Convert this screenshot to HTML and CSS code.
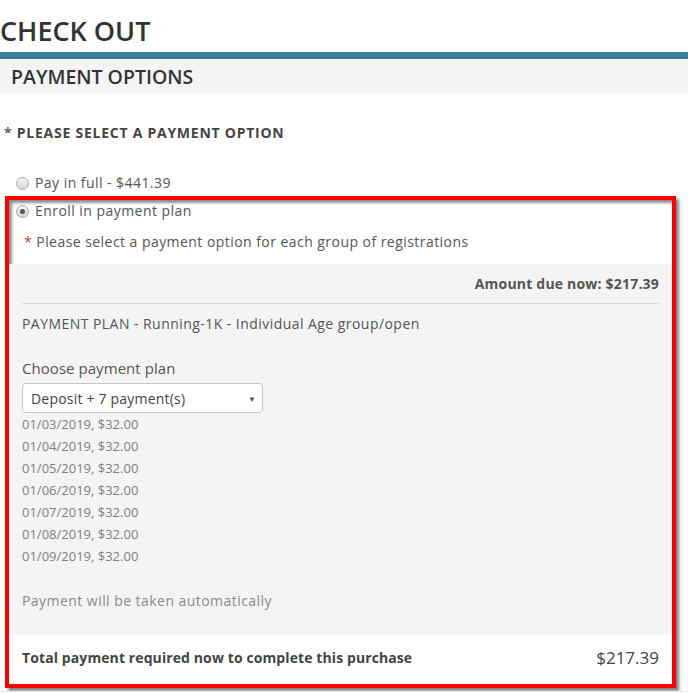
FILE: index.html
```html
<!DOCTYPE html>
<html lang="en">
<head>
    <meta charset="UTF-8">
    <meta name="viewport" content="width=device-width, initial-scale=1.0">
    <title>Check Out</title>
    <link rel="stylesheet" href="styles.css">
</head>
<body>
    <h1 class="page-title">CHECK OUT</h1>
    <div class="title-bar"></div>
    <div class="section-title">PAYMENT OPTIONS</div>

    <div class="required-label"><span class="star">*</span> PLEASE SELECT A PAYMENT OPTION</div>

    <div class="option-row">
        <span class="radio"></span>
        <span>Pay in full - $441.39</span>
    </div>

    <!-- highlighted payment plan block -->
    <div class="highlight">
        <div class="option-row enroll">
            <span class="radio checked"></span>
            <span>Enroll in payment plan</span>
        </div>
        <div class="note"><span class="note-star">*</span> Please select a payment option for each group of registrations</div>

        <div class="plan-panel">
            <div class="amount-due">Amount due now: $217.39</div>
            <div class="divider"></div>
            <div class="plan-title">PAYMENT PLAN - Running-1K - Individual Age group/open</div>
            <div class="choose-label">Choose payment plan</div>
            <div class="select-box">
                <span>Deposit + 7 payment(s)</span>
                <span class="select-arrow">&#9660;</span>
            </div>
            <ul class="schedule">
                <li>01/03/2019, $32.00</li>
                <li>01/04/2019, $32.00</li>
                <li>01/05/2019, $32.00</li>
                <li>01/06/2019, $32.00</li>
                <li>01/07/2019, $32.00</li>
                <li>01/08/2019, $32.00</li>
                <li>01/09/2019, $32.00</li>
            </ul>
            <div class="auto-note">Payment will be taken automatically</div>
        </div>

        <div class="total-row">
            <span class="total-label">Total payment required now to complete this purchase</span>
            <span class="total-amount">$217.39</span>
        </div>
    </div>

    <div class="bottom-line"></div>
</body>
</html>
```

FILE: styles.css
```css
/* general */
html, body {
    margin: 0;
    padding: 0;
}

body {
    background-color: #fff;
    font-family: "Open Sans", Arial, sans-serif;
    color: #555;
    font-size: 14px;
    letter-spacing: 0.45px;
    overflow: hidden;
}

.page-title {
    margin: 0 0 4px 0;
    padding-top: 14px;
    font-size: 27px;
    line-height: 34px;
    font-weight: 600;
    letter-spacing: 0;
    color: #333;
}

.title-bar {
    height: 7px;
    background-color: #3b7fa0;
}

.section-title {
    height: 35px;
    line-height: 35px;
    padding-left: 11px;
    background-color: #f4f4f4;
    font-size: 19.5px;
    font-weight: 600;
    letter-spacing: 0;
    color: #333;
}

.required-label {
    padding: 30px 0 0 4px;
    line-height: 18px;
    font-size: 14px;
    font-weight: 700;
    letter-spacing: 0.75px;
    color: #444;
}

.required-label .star {
    color: #666;
}

.option-row {
    display: flex;
    align-items: center;
    margin-top: 32px;
    padding-left: 16px;
    line-height: 18px;
    font-size: 14px;
    color: #555;
}

.radio {
    width: 11px;
    height: 11px;
    margin-right: 6px;
    border: 1px solid #a8a8a8;
    border-radius: 50%;
    background: linear-gradient(#f4f4f4, #d6d6d6);
    display: flex;
    align-items: center;
    justify-content: center;
}

.radio.checked::after {
    content: "";
    width: 5px;
    height: 5px;
    border-radius: 50%;
    background-color: #555;
}

/* red highlight frame */
.highlight {
    box-sizing: border-box;
    width: 671px;
    margin: 4px 0 0 5px;
    border: 4px solid #f00;
    box-shadow: 3px 3px 3px rgba(0, 0, 0, 0.5), inset 3px 3px 3px rgba(0, 0, 0, 0.45);
}

.option-row.enroll {
    margin-top: 2px;
    padding-left: 7px;
}

.note {
    margin-top: 13px;
    padding-left: 15px;
    line-height: 18px;
}

.note-star {
    color: #c0392b;
}

.plan-panel {
    margin-top: 13px;
    padding: 11px 13px 24px 13px;
    background-color: #f4f4f4;
}

.amount-due {
    text-align: right;
    font-weight: 700;
    line-height: 18px;
    letter-spacing: 0.2px;
    color: #555;
}

.divider {
    height: 1px;
    margin-top: 10px;
    background-color: #dcdcdc;
}

.plan-title {
    margin-top: 11px;
    line-height: 18px;
}

.choose-label {
    margin-top: 26px;
    line-height: 18px;
    font-size: 15px;
    letter-spacing: 0.05px;
}

.select-box {
    box-sizing: border-box;
    width: 241px;
    height: 30px;
    margin-top: 6px;
    padding: 0 6px 0 8px;
    display: flex;
    align-items: center;
    justify-content: space-between;
    background-color: #fff;
    border: 1px solid #c8c8c8;
    border-radius: 4px;
    letter-spacing: 0.2px;
    color: #444;
}

.select-arrow {
    font-size: 8px;
    color: #555;
}

.schedule {
    list-style: none;
    margin: 0;
    padding: 0;
}

.schedule li {
    line-height: 22px;
    font-size: 13px;
    letter-spacing: 0;
    color: #808080;
}

.auto-note {
    margin-top: 25px;
    line-height: 18px;
    color: #8a8a8a;
}

.total-row {
    box-sizing: border-box;
    height: 50px;
    padding: 0 13px 3px 13px;
    display: flex;
    align-items: center;
    justify-content: space-between;
    background-color: #fff;
}

.total-label {
    font-weight: 700;
    font-size: 14px;
    letter-spacing: 0.1px;
    color: #444;
}

.total-amount {
    font-size: 17px;
    letter-spacing: 0;
    color: #444;
}

.bottom-line {
    margin-top: 3px;
    border-top: 1px solid #e8e8e8;
}
```
